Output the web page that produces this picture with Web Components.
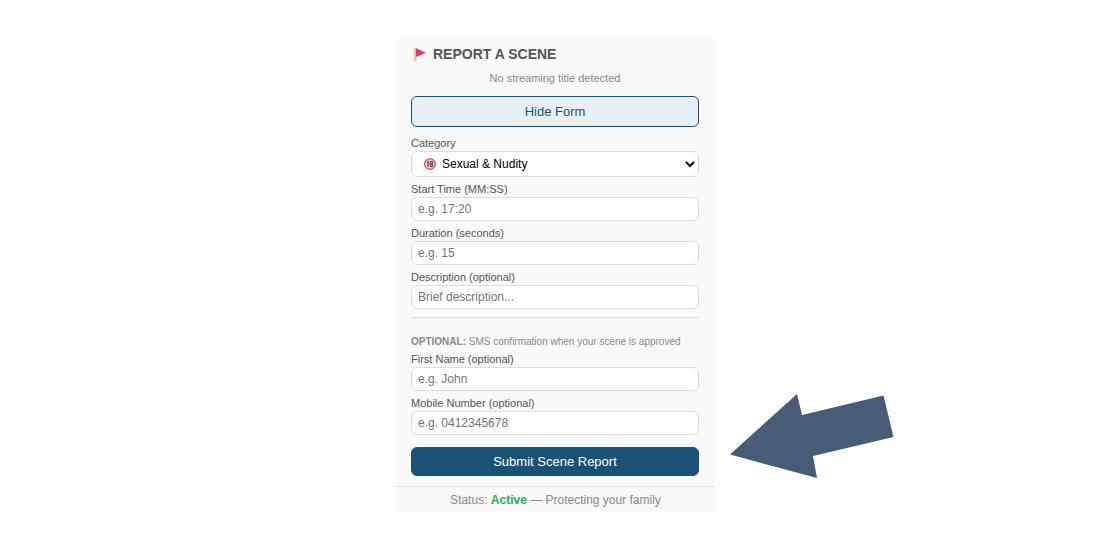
<!DOCTYPE html>
<html lang="en">
<head>
<meta charset="utf-8">
<title>Report a scene</title>
<style>
body { margin: 0; background: #fefefe; font-family: "Liberation Sans", Arial, sans-serif; }
</style>
</head>
<body>
<report-page></report-page>
<script>
const define = (name, html, setup) => {
  const template = document.createElement('template');
  template.innerHTML = html;
  customElements.define(name, class extends HTMLElement {
    constructor() {
      super();
      this.attachShadow({ mode: 'open' }).append(template.content.cloneNode(true));
    }
    connectedCallback() {
      if (setup) setup(this, this.shadowRoot);
    }
  });
};

const box = `
  :host { display: block; }
  label { display: block; font-size: 11px; line-height: 16px; color: #555; }
  input, select {
    display: block; box-sizing: border-box; width: 100%; margin: 0;
    border: 1px solid #ddd; border-radius: 6px; background-color: #fff;
    font: 12px "Liberation Sans", Arial, sans-serif;
  }`;

define('flag-icon', `
<style>:host { display: block; } svg { display: block; }</style>
<svg width="16" height="14" viewBox="0 0 16 14" aria-hidden="true">
  <path d="M3 1h2.500v12.800h-2.500z" fill="#f3bda6"/>
  <path d="M5 1.300L15 5.800L5 10z" fill="#e2386b"/>
</svg>`);

define('adult-icon', `
<style>:host { display: block; } svg { display: block; }</style>
<svg width="14" height="14" viewBox="0 0 14 14" fill="none" aria-hidden="true">
  <circle cx="7" cy="7" r="5.300" fill="#f9dfe3" stroke="#de5a72" stroke-width="1.600"/>
  <path d="M3.900 5.200L5.100 4.400V9.700" stroke="#444" stroke-width="1.300"/>
  <circle cx="8.500" cy="5.600" r="1.200" stroke="#444" stroke-width="1.100"/>
  <circle cx="8.500" cy="8.300" r="1.400" stroke="#444" stroke-width="1.100"/>
  <path d="M3.300 3.300L10.700 10.700" stroke="#de5a72"/>
</svg>`);

define('text-field', `
<style>${box}
  input { height: 24px; padding: 0 6px; }
  input::placeholder { color: #757575; }
</style>
<label for="control"><slot></slot></label>
<input id="control" type="text">`, (host, root) => {
  const input = root.querySelector('input');
  input.placeholder = host.getAttribute('hint') || '';
  input.type = host.getAttribute('type') || 'text';
});

define('category-field', `
<style>${box}
  .control { display: grid; align-items: center; }
  select, adult-icon { grid-area: 1 / 1; }
  select { height: 26px; padding: 0 0 0 26px; color: #000; }
  adult-icon { justify-self: start; margin-left: 12px; z-index: 1; pointer-events: none; }
</style>
<label for="category">Category</label>
<div class="control">
  <select id="category"><option>Sexual &amp; Nudity</option></select>
  <adult-icon></adult-icon>
</div>`);

define('action-button', `
<style>
  :host { display: block; }
  button {
    display: block; width: 100%; margin: 0; padding: 6px 12px; cursor: pointer;
    border: 1px solid #1a5276; border-radius: 6px; background: #1a5276; color: #fff;
    font: 13px/15px "Liberation Sans", Arial, sans-serif;
  }
  :host([outline]) button { padding: 7px 12px; background: #e8f0f7; color: #1a5276; }
</style>
<button type="button"><slot></slot></button>`);

define('status-bar', `
<style>
  :host { display: block; border-top: 1px solid #ddd; padding: 6px 0 4px; text-align: center; font-size: 12px; line-height: 14px; color: #888; }
  strong { color: #27ae60; }
</style>
Status: <strong>Active</strong> — Protecting your family`);

define('report-panel', `
<style>
  :host { display: block; background: #f9f9f9; }
  .body { padding: 10px 16px 10px 15px; }
  h2 { display: flex; align-items: center; gap: 6px; margin: 0 0 10px; font-size: 14px; line-height: 14px; color: #555; }
  .detected { margin: 0 0 10px; text-align: center; font-size: 11px; line-height: 15px; color: #888; }
  form { display: grid; gap: 4px; margin-top: 8px; }
  hr { width: 100%; height: 1px; margin: 4px 0 14px; border: 0; background: #ddd; }
  .note { margin: 0; font-size: 10px; line-height: 11px; color: #888; }
  .submit { margin-top: 8px; }
</style>
<div class="body">
  <h2><flag-icon></flag-icon>REPORT A SCENE</h2>
  <p class="detected">No streaming title detected</p>
  <action-button outline>Hide Form</action-button>
  <form>
    <category-field></category-field>
    <text-field hint="e.g. 17:20">Start Time (MM:SS)</text-field>
    <text-field hint="e.g. 15">Duration (seconds)</text-field>
    <text-field hint="Brief description...">Description (optional)</text-field>
    <hr>
    <p class="note"><strong>OPTIONAL:</strong> SMS confirmation when your scene is approved</p>
    <text-field hint="e.g. John">First Name (optional)</text-field>
    <text-field hint="e.g. 0412345678" type="tel">Mobile Number (optional)</text-field>
    <action-button class="submit">Submit Scene Report</action-button>
  </form>
</div>
<status-bar></status-bar>`);

define('pointer-arrow', `
<style>:host { display: block; } svg { display: block; width: 100%; }</style>
<svg viewBox="0 0 164 84" aria-hidden="true">
  <path d="M0 60.500L67 0L72 21L153.500 1.500L163.500 43L83 62L87 84z" fill="#475c77"/>
</svg>`);

define('report-page', `
<style>
  :host { display: grid; grid-template-columns: 1fr minmax(auto, 319px) 1fr; padding: 37px 0 37px 11px; }
  report-panel { grid-column: 2; }
  pointer-arrow { align-self: end; width: 164px; max-width: 100%; margin: 0 0 33px 15px; }
</style>
<report-panel></report-panel>
<pointer-arrow></pointer-arrow>`);
</script>
</body>
</html>
